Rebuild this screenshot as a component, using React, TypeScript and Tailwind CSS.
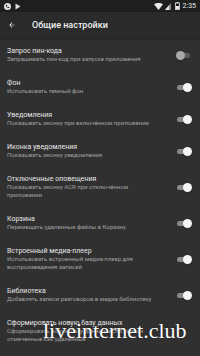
import React from 'react'

type Item = { title: string; sub: string; on?: boolean; noToggle?: boolean }

const items: Item[] = [
  { title: 'Запрос пин-кода', sub: 'Запрашивать пин-код при запуске приложения', on: false },
  { title: 'Фон', sub: 'Использовать темный фон', on: true },
  { title: 'Уведомления', sub: 'Показывать иконку при включённом приложении', on: true },
  { title: 'Иконка уведомления', sub: 'Показывать иконку уведомления', on: true },
  { title: 'Отключенные оповещения', sub: 'Показывать иконку ACR при отключённом приложении', on: true },
  { title: 'Корзина', sub: 'Перемещать удаленные файлы в Корзину', on: true },
  { title: 'Встроенный медиа-плеер', sub: 'Использовать встроенный медиа-плеер для воспроизведения записей', on: true },
  { title: 'Библиотека', sub: 'Добавлять записи разговоров в медиа библиотеку', on: true },
  { title: 'Сформировать новую базу данных', sub: 'Сформировать новую базу данных, если записи отмеченные как удаленные', noToggle: true },
]

function Toggle({ on }: { on?: boolean }) {
  return (
    <div className="relative w-[14px] h-[9px] shrink-0 flex items-center">
      <div className={`w-[13px] h-[5px] rounded-full ${on ? 'bg-[#8a8a8a]' : 'bg-[#5c5c5c]'}`} />
      <div
        className={`absolute top-0 w-[9px] h-[9px] rounded-full shadow-sm ${
          on ? 'right-[-1px] bg-[#f5f5f5]' : 'left-[-1px] bg-[#a8a8a8]'
        }`}
      />
    </div>
  )
}

export default function App() {
  return (
    <div
      className="w-[200px] h-[356px] overflow-hidden relative bg-[#303030] flex flex-col"
      style={{ fontFamily: 'Roboto, "Noto Sans", sans-serif' }}
    >
      {/* Status bar */}
      <div className="h-[12px] bg-[#1e1e1e] flex items-center justify-between px-[4px] shrink-0">
        <div className="flex items-center gap-[4px]">
          <svg width="7" height="7" viewBox="0 0 10 10">
            <circle cx="5" cy="5" r="5" fill="#e0e0e0" />
            <path d="M3 2.5 L4.2 2.5 L4.8 4 L4 4.6 Q4.6 5.8 5.5 6.2 L6.1 5.4 L7.5 6 L7.5 7.3 Q4.5 7.5 2.8 4.2 Z" fill="#1e1e1e" />
          </svg>
          <svg width="6" height="7" viewBox="0 0 6 7">
            <path d="M0.5 0.5 L5.5 3.5 L0.5 6.5 Z" fill="#e0e0e0" />
          </svg>
        </div>
        <div className="flex items-center gap-[2px]">
          <svg width="9" height="7" viewBox="0 0 9 7">
            <path d="M0 1.2 Q4.5 -1.5 9 1.2 L4.5 7 Z" fill="#e8e8e8" />
          </svg>
          <svg width="6" height="7" viewBox="0 0 6 7">
            <path d="M6 0 L6 7 L0 7 Z" fill="#8a8a8a" />
            <path d="M4 2.3 L4 7 L0 7 Z" fill="#e8e8e8" />
          </svg>
          <svg width="5" height="8" viewBox="0 0 5 8" className="ml-[2px]">
            <rect x="1.5" y="0" width="2" height="1" fill="#e8e8e8" />
            <rect x="0.5" y="1" width="4" height="7" fill="none" stroke="#e8e8e8" strokeWidth="0.8" />
            <rect x="1" y="4" width="3" height="3.6" fill="#e8e8e8" />
          </svg>
          <span className="text-[7px] leading-none text-[#e8e8e8] ml-[1px]">2:35</span>
        </div>
      </div>

      {/* App bar */}
      <div className="h-[26px] bg-[#2a2a2a] flex items-center shrink-0 shadow-[0_1px_2px_rgba(0,0,0,0.4)] z-10">
        <svg width="8" height="8" viewBox="0 0 24 24" className="ml-[8px]">
          <path d="M20 11H7.8l5.6-5.6L12 4l-8 8 8 8 1.4-1.4L7.8 13H20z" fill="#eeeeee" />
        </svg>
        <span className="ml-[16px] text-[9px] font-medium text-[#f0f0f0] leading-none">Общие настройки</span>
      </div>

      {/* List */}
      <div className="flex flex-col pt-[1px]">
        {items.map((it) => (
          <div key={it.title} className="flex items-center pl-[7px] pr-[9px] py-[8px]">
            <div className="flex-1 min-w-0 pr-[20px]">
              <div className="text-[7px] leading-[8px] text-[#e6e6e6]">{it.title}</div>
              <div className="text-[6px] leading-[8px] text-[#a0a0a0]">{it.sub}</div>
            </div>
            {!it.noToggle && <Toggle on={it.on} />}
          </div>
        ))}
      </div>

      {/* Watermark */}
      <div
        className="absolute left-[43px] top-[320px] text-[22px] leading-none text-white"
        style={{ fontFamily: '"Liberation Serif", serif', textShadow: '0 0 1px rgba(0,0,0,0.6)' }}
      >
        liveinternet.club
      </div>
    </div>
  )
}
